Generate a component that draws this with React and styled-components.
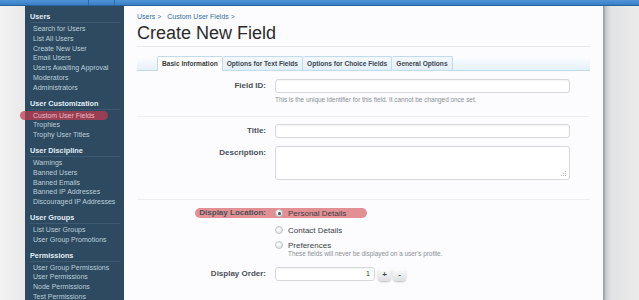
import React from 'react';
import styled, { createGlobalStyle } from 'styled-components';

const Global = createGlobalStyle`
  html, body { margin: 0; padding: 0; }
  body {
    background: #efefef;
    font-family: "Liberation Sans", Arial, sans-serif;
    overflow: hidden;
  }
`;

const Page = styled.div`
  width: 639px;
  height: 300px;
  display: flex;
  flex-direction: column;
  overflow: hidden;
`;

const TopBar = styled.div`
  height: 5px;
  flex: none;
  background: linear-gradient(#4f94d8, #3a7fc5);
  border-bottom: 1px solid #2b639c;
  display: flex;
`;

const TopSeg = styled.div`
  width: ${({ w }) => w}px;
  border-right: 1px solid #2f6aa6;
`;

const Main = styled.div`
  flex: 1;
  display: flex;
  min-height: 0;
`;

const Gutter = styled.div`
  width: 25px;
  flex: none;
  background: linear-gradient(90deg, #f2f2f2, #e9e9e9);
`;

const Sidebar = styled.nav`
  width: 99px;
  flex: none;
  background: #2d4a60;
  padding: 6px 4px 0 5px;
  box-sizing: border-box;
  display: flex;
  flex-direction: column;
  gap: 6px;
`;

const Section = styled.div`
  display: flex;
  flex-direction: column;
`;

const Heading = styled.div`
  font-size: 7.3px;
  font-weight: bold;
  line-height: 10px;
  color: #e1edf6;
  border-bottom: 1px solid #3c5b73;
  margin-bottom: 1px;
`;

const Item = styled.div`
  position: relative;
  font-size: 7px;
  line-height: 9.8px;
  padding-left: 3px;
  color: ${({ active }) => (active ? '#ecbcc3' : '#bccfdd')};
  white-space: nowrap;
  z-index: 0;
`;

const Pill = styled.span`
  position: absolute;
  left: -10px;
  right: 12px;
  top: 0;
  bottom: 0;
  border-radius: 5px;
  background: rgba(190, 60, 80, 0.75);
  z-index: -1;
`;

const Content = styled.main`
  width: 479px;
  flex: none;
  background: #fcfcfe;
  padding: 7px 13px 0 13px;
  box-sizing: border-box;
`;

const Crumbs = styled.div`
  font-size: 7px;
  line-height: 8px;
  color: #2f6c9e;
  display: flex;
  gap: 6px;
`;

const Title = styled.h1`
  margin: 2px 0 0;
  font-size: 18px;
  font-weight: normal;
  line-height: 20px;
  color: #2b2b2b;
  padding-bottom: 3px;
  border-bottom: 1px solid #e6e8ea;
`;

const TabBar = styled.div`
  margin-top: 9px;
  height: 14px;
  padding-left: 20px;
  display: flex;
  align-items: flex-end;
  background: linear-gradient(#fdfeff, #e6f1f9);
  border-bottom: 1px solid #c2dbec;
`;

const Tab = styled.div`
  box-sizing: border-box;
  padding: 0 4px;
  font-size: 6.6px;
  font-weight: bold;
  line-height: 13px;
  color: ${({ active }) => (active ? '#3a3a3a' : '#3c4650')};
  background: ${({ active }) => (active ? '#ffffff' : 'linear-gradient(#f3f8fc, #e3eff8)')};
  border: 1px solid #c2dbec;
  border-bottom: none;
  border-left-width: ${({ first }) => (first ? '1px' : '0')};
  border-radius: 2px 2px 0 0;
  margin-bottom: ${({ active }) => (active ? '-1px' : '0')};
  height: ${({ active }) => (active ? '15px' : '14px')};
`;

const Form = styled.div`
  display: flex;
  flex-direction: column;
`;

const Row = styled.div`
  display: grid;
  grid-template-columns: 129px 295px;
  column-gap: 9px;
  margin-top: ${({ top }) => top}px;
  position: relative;
`;

const Label = styled.div`
  text-align: right;
  font-size: 8px;
  font-weight: bold;
  color: #4a5057;
  line-height: ${({ lh }) => lh || 14}px;
  position: relative;
  z-index: 1;
`;

const Field = styled.div`
  display: flex;
  flex-direction: column;
  position: relative;
  z-index: 1;
`;

const Input = styled.div`
  height: 14px;
  width: ${({ w }) => (w ? `${w}px` : '100%')};
  box-sizing: border-box;
  border: 1px solid #d6d8da;
  border-radius: 3px;
  background: #ffffff;
  box-shadow: inset 0 1px 2px rgba(0, 0, 0, 0.05);
  font-size: 7px;
  line-height: 12px;
  text-align: right;
  padding-right: 4px;
  color: #333;
`;

const TextArea = styled.div`
  position: relative;
  height: 34px;
  box-sizing: border-box;
  border: 1px solid #d6d8da;
  border-radius: 3px;
  background: #ffffff;
`;

const Grip = styled.svg`
  position: absolute;
  right: 2px;
  bottom: 2px;
`;

const Hint = styled.div`
  font-size: 6.4px;
  line-height: 8px;
  color: #8a8f94;
  margin-top: ${({ top }) => top ?? 3}px;
  padding-left: ${({ indent }) => indent || 0}px;
`;

const Divider = styled.div`
  height: 1px;
  background: #eceef0;
  margin-top: ${({ top }) => top}px;
`;

const Option = styled.div`
  display: flex;
  align-items: center;
  gap: 5px;
  height: 10px;
  margin-top: ${({ top }) => top || 0}px;
  font-size: 8px;
  color: #3a3f45;
`;

const Radio = styled.span`
  width: 8px;
  height: 8px;
  box-sizing: border-box;
  border-radius: 50%;
  border: 1px solid #bfc3c7;
  background: radial-gradient(circle at 40% 35%, #ffffff, #d9dcdf);
  display: flex;
  align-items: center;
  justify-content: center;
  &::after {
    content: '';
    width: 3px;
    height: 3px;
    border-radius: 50%;
    background: ${({ checked }) => (checked ? '#4a4f55' : 'transparent')};
  }
`;

const Highlight = styled.div`
  position: absolute;
  left: 58px;
  top: 0;
  width: 172px;
  height: 10px;
  border-radius: 5px;
  background: #e39095;
  z-index: 0;
`;

const Spinner = styled.div`
  display: flex;
  align-items: center;
  gap: 2px;
`;

const SpinButton = styled.div`
  width: 13px;
  height: 13px;
  margin-left: ${({ first }) => (first ? '1px' : '0')};
  border-radius: 4px;
  background: linear-gradient(#ffffff, #dcdee0);
  box-shadow: 0 1px 2px rgba(0, 0, 0, 0.25);
  font-size: 8px;
  font-weight: bold;
  line-height: 13px;
  text-align: center;
  color: #444;
`;

const RightEdge = styled.div`
  flex: 1;
  background: linear-gradient(90deg, #8f969c 0, #c9ccce 3px, #e2e3e4 8px, #ebebeb 100%);
`;

const nav = [
  ['Users', ['Search for Users', 'List All Users', 'Create New User', 'Email Users', 'Users Awaiting Approval', 'Moderators', 'Administrators']],
  ['User Customization', ['Custom User Fields', 'Trophies', 'Trophy User Titles']],
  ['User Discipline', ['Warnings', 'Banned Users', 'Banned Emails', 'Banned IP Addresses', 'Discouraged IP Addresses']],
  ['User Groups', ['List User Groups', 'User Group Promotions']],
  ['Permissions', ['User Group Permissions', 'User Permissions', 'Node Permissions', 'Test Permissions']],
];

const tabs = ['Basic Information', 'Options for Text Fields', 'Options for Choice Fields', 'General Options'];

export default function App() {
  return (
    <Page>
      <Global />
      <TopBar>
        <TopSeg w={88} />
        <TopSeg w={25} />
      </TopBar>
      <Main>
        <Gutter />
        <Sidebar>
          {nav.map(([head, items]) => (
            <Section key={head}>
              <Heading>{head}</Heading>
              {items.map((it) => (
                <Item key={it} active={it === 'Custom User Fields'}>
                  {it === 'Custom User Fields' && <Pill />}
                  {it}
                </Item>
              ))}
            </Section>
          ))}
        </Sidebar>
        <Content>
          <Crumbs>
            <span>Users &gt;</span>
            <span>Custom User Fields &gt;</span>
          </Crumbs>
          <Title>Create New Field</Title>
          <TabBar>
            {tabs.map((t, i) => (
              <Tab key={t} active={i === 0} first={i === 0}>{t}</Tab>
            ))}
          </TabBar>
          <Form>
            <Row top={8}>
              <Label>Field ID:</Label>
              <Field>
                <Input />
                <Hint>This is the unique identifier for this field. It cannot be changed once set.</Hint>
              </Field>
            </Row>
            <Divider top={12} />
            <Row top={7}>
              <Label>Title:</Label>
              <Field><Input /></Field>
            </Row>
            <Row top={8}>
              <Label>Description:</Label>
              <Field>
                <TextArea>
                  <Grip width="6" height="6" viewBox="0 0 6 6">
                    <g fill="#b5b9bd">
                      <rect x="4" y="0" width="1" height="1" />
                      <rect x="2" y="2" width="1" height="1" />
                      <rect x="4" y="2" width="1" height="1" />
                      <rect x="0" y="4" width="1" height="1" />
                      <rect x="2" y="4" width="1" height="1" />
                      <rect x="4" y="4" width="1" height="1" />
                    </g>
                  </Grip>
                </TextArea>
              </Field>
            </Row>
            <Divider top={19} />
            <Row top={8}>
              <Highlight />
              <Label lh={10}>Display Location:</Label>
              <Field>
                <Option><Radio checked />Personal Details</Option>
                <Option top={7}><Radio />Contact Details</Option>
                <Option top={5}><Radio />Preferences</Option>
                <Hint top={0} indent={13}>These fields will never be displayed on a user's profile.</Hint>
              </Field>
            </Row>
            <Row top={9}>
              <Label>Display Order:</Label>
              <Spinner>
                <Input w={100}>1</Input>
                <SpinButton first>+</SpinButton>
                <SpinButton>-</SpinButton>
              </Spinner>
            </Row>
          </Form>
        </Content>
        <RightEdge />
      </Main>
    </Page>
  );
}
